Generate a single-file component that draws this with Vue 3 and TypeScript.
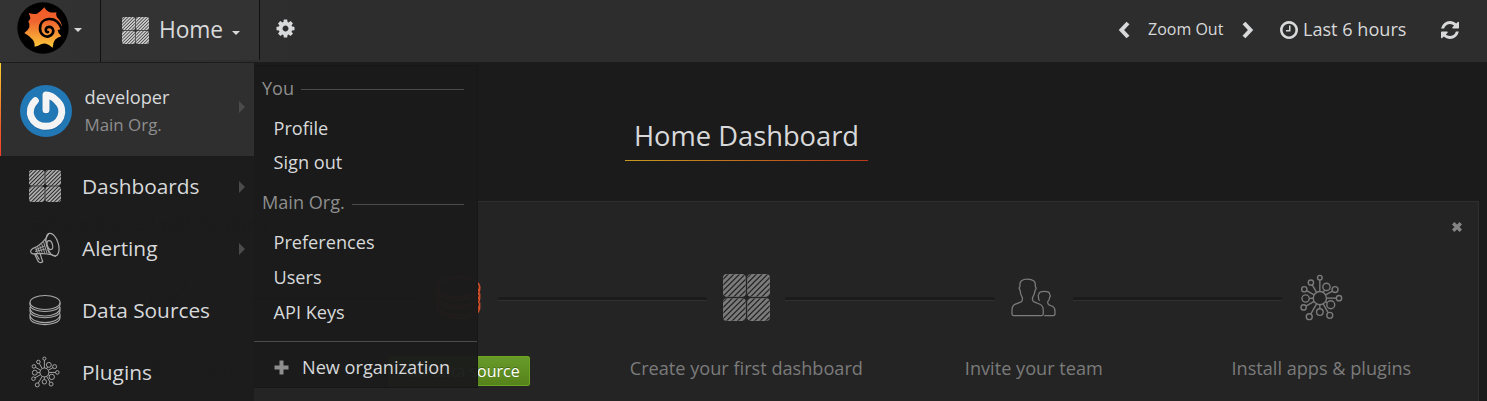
<script setup lang="ts">
interface MenuItem { label: string; icon: 'grid' | 'horn' | 'db' | 'plug'; arrow: boolean }
interface Step { label: string; icon: 'check' | 'db' | 'grid' | 'users' | 'plug' }

const menu: MenuItem[] = [
  { label: 'Dashboards', icon: 'grid', arrow: true },
  { label: 'Alerting', icon: 'horn', arrow: true },
  { label: 'Data Sources', icon: 'db', arrow: false },
  { label: 'Plugins', icon: 'plug', arrow: false },
]
const steps: Step[] = [
  { label: 'Install Grafana', icon: 'check' },
  { label: 'Add data source', icon: 'db' },
  { label: 'Create your first dashboard', icon: 'grid' },
  { label: 'Invite your team', icon: 'users' },
  { label: 'Install apps & plugins', icon: 'plug' },
]
const groups = [
  { title: 'You', cls: 'g-you', links: ['Profile', 'Sign out'] },
  { title: 'Main Org.', cls: 'g-org', links: ['Preferences', 'Users', 'API Keys'] },
]
const nodes: [number, number, number][] = [
  [300, 231, 7], [273, 246, 8], [253, 266, 8], [257, 294, 11], [251, 321, 8], [268, 349, 9],
  [300, 335, 10], [330, 345, 9], [333, 313, 12], [358, 293, 8], [346, 267, 9], [320, 259, 11],
]
const spokes = nodes.map(([x, y, r]) => {
  const dx = x - 300
  const dy = y - 293
  const d = Math.hypot(dx, dy)
  return { x1: 300 + (dx / d) * 20, y1: 293 + (dy / d) * 20, x2: x - (dx / d) * r, y2: y - (dy / d) * r }
})
// Diagonal hatching across the 46-unit tile icon
const hatch = Array.from({ length: 18 }, (_, i) => {
  const s = 2.6 + i * 5.5
  return `M${(s - 48).toFixed(1)} 48L${(s + 2).toFixed(1)} -2`
}).join('')
</script>

<template>
  <div class="page">
    <svg class="defs" width="0" height="0">
      <defs>
        <clipPath id="tiles">
          <rect x="0" y="0" width="22.300" height="22.300" rx="4" /><rect x="23.700" y="0" width="22.300" height="22.300" rx="4" />
          <rect x="0" y="23.700" width="22.300" height="22.300" rx="4" /><rect x="23.700" y="23.700" width="22.300" height="22.300" rx="4" />
        </clipPath>
        <linearGradient id="flame" x1="0" y1="0" x2="0" y2="1">
          <stop offset="0" stop-color="#f05a28" /><stop offset=".35" stop-color="#f0652e" /><stop offset="1" stop-color="#fbca3a" />
        </linearGradient>
        <symbol id="i-grid" viewBox="0 0 46 46">
          <path :d="hatch" clip-path="url(#tiles)" fill="none" stroke="currentColor" stroke-width="2.650" />
          <g fill="none" stroke="currentColor" stroke-width=".6" stroke-opacity=".6">
            <rect x=".4" y=".4" width="21.600" height="21.600" rx="3.500" /><rect x="24" y=".4" width="21.600" height="21.600" rx="3.500" />
            <rect x=".4" y="24" width="21.600" height="21.600" rx="3.500" /><rect x="24" y="24" width="21.600" height="21.600" rx="3.500" />
          </g>
        </symbol>
        <symbol id="i-db" viewBox="84 55 98 96">
          <g fill="none" stroke="currentColor" stroke-width="3.400">
            <ellipse cx="133" cy="80" rx="46" ry="21.500" />
            <path d="M87 80V86C87 115 179 115 179 86V80M87 94V105C87 134 179 134 179 105V94M87 98C92 129 174 129 179 98M87 114V126C87 155 179 155 179 126V114M87 119C92 149 174 149 179 119" />
          </g>
        </symbol>
        <symbol id="i-plug" viewBox="240 220 130 142">
          <g fill="none" stroke="currentColor" stroke-width="4.200">
            <circle cx="300" cy="293" r="20" />
            <circle v-for="(n, i) in nodes" :key="i" :cx="n[0]" :cy="n[1]" :r="n[2]" />
            <line v-for="(s, i) in spokes" :key="'s' + i" :x1="s.x1" :y1="s.y1" :x2="s.x2" :y2="s.y2" />
          </g>
        </symbol>
        <symbol id="i-users" viewBox="216 49 134 116">
          <g fill="none" stroke="currentColor" stroke-width="3.800">
            <path d="M250 108C246 101 243 93 243 85C240 82 240 77 243 73C240 58 250 52 265 52S291 58 288 73C291 77 291 82 288 85C287 93 284 101 280 108V113Q281 118 285 120L302 127Q312 131 312 145V156Q312 161 307 161H224Q219 161 219 156V145Q219 131 229 127L246 120Q250 118 250 113Z" />
            <path d="M301 117Q297 112 298 106Q295 101 299 97Q300 89 315 89Q331 89 331 97Q335 102 331 107Q330 115 325 120Q325 127 329 129L339 133Q347 137 347 147V155Q347 161 342 161H315" />
          </g>
        </symbol>
        <symbol id="i-horn" viewBox="86 228 96 98">
          <g fill="none" stroke="currentColor" stroke-width="3.600">
            <ellipse cx="157" cy="267" rx="18" ry="36" transform="rotate(-16 157 267)" />
            <ellipse cx="149" cy="268" rx="8" ry="14" transform="rotate(-16 149 268)" />
            <path d="M145 233C136 252 122 268 96 279C88 283 88 293 97 295C124 291 146 294 168 302M102 295L113 318Q119 325 127 319L119 294M107 296L117 313" />
            <path d="M106 277L111 293M112 274L117 291M118 270L125 291M124 265L133 292M130 259L140 293M135 253L139 263M142 282L147 294M104 283L134 270M104 288L136 280" stroke-width="2.800" />
          </g>
        </symbol>
        <symbol id="i-check" viewBox="0 0 44 44">
          <path d="M36 10A18.500 18.500 0 1 0 40 22M13 17l8 9 17-18" fill="none" stroke="currentColor" stroke-width="1.600" />
        </symbol>
      </defs>
    </svg>

    <header class="navbar">
      <div class="brand">
        <svg class="logo" viewBox="0 0 156 156">
          <circle cx="78" cy="78" r="77" fill="#000" />
          <path fill="url(#flame)" d="M82 16Q87 27 95 29Q105 33 118 31Q116 40 120 46Q134 58 135 78Q128 84 122 84Q123 95 133 103Q120 107 114 113Q108 121 107 137Q95 127 87 125Q79 124 72 127Q64 132 53 134Q53 120 48 114Q40 103 22 93Q34 85 37 76Q39 67 34 58Q39 54 40 49Q39 41 35 33Q51 38 60 35Q71 29 82 16Z" />
          <path d="M141 97L133 78C125 58 110 50 95 51C77 53 68 66 69 81C70 97 83 106 95 103C107 100 112 88 107 80C102 73 91 73 87 80C85 86 88 91 93 90" fill="none" stroke="#000" stroke-width="8" stroke-linecap="round" />
        </svg>
        <i class="caret" />
      </div>
      <div class="dash">
        <svg class="dash-icon"><use href="#i-grid" /></svg>
        <span class="dash-name">Home</span>
        <i class="caret" />
      </div>
      <svg class="cog" viewBox="0 0 1792 1792"><path fill="currentColor" d="M1152 896q0-106-75-181t-181-75-181 75-75 181 75 181 181 75 181-75 75-181zm512-109v222q0 12-8 23t-20 13l-185 28q-19 54-39 91 35 50 107 138 10 12 10 25t-9 23q-27 37-99 108t-94 71q-12 0-26-9l-138-108q-44 23-91 38-16 136-29 186-7 28-36 28h-222q-14 0-24.500-8.500t-11.500-21.500l-28-184q-49-16-90-37l-141 107q-10 9-25 9-14 0-25-11-126-114-165-168-7-10-7-23 0-12 8-23 15-21 51-66.500t54-70.500q-27-50-41-99l-183-27q-13-2-21-12.500t-8-23.500v-222q0-12 8-23t19-13l186-28q14-46 39-92-40-57-107-138-10-12-10-24 0-10 9-23 26-36 98.500-107.500t94.500-71.500q13 0 26 10l138 107q44-23 91-38 16-136 29-186 7-28 36-28h222q14 0 24.500 8.500t11.500 21.500l28 184q49 16 90 37l142-107q9-9 24-9 13 0 25 10 129 119 165 170 7 8 7 22 0 12-8 23-15 21-51 66.500t-54 70.500q26 50 41 98l183 28q13 2 21 12.500t8 23.500z" /></svg>
      <div class="tools">
        <svg class="chev" viewBox="0 0 12 18"><path d="M10 2L3.500 9L10 16" /></svg>
        <span class="zoom">Zoom Out</span>
        <svg class="chev" viewBox="0 0 12 18"><path d="M2 2L8.500 9L2 16" /></svg>
        <svg class="clock" viewBox="128 128 1536 1536"><path fill="currentColor" d="M1024 544v448q0 14-9 23t-23 9h-320q-14 0-23-9t-9-23v-64q0-14 9-23t23-9h224v-352q0-14 9-23t23-9h64q14 0 23 9t9 23zm416 352q0-148-73-273t-198-198-273-73-273 73-198 198-73 273 73 273 198 198 273 73 273-73 198-198 73-273zm224 0q0 209-103 385.500t-279.500 279.500-385.500 103-385.500-103-279.500-279.500-103-385.500 103-385.500 279.500-279.500 385.500-103 385.500 103 279.500 279.500 103 385.500z" /></svg>
        <span class="range">Last 6 hours</span>
        <svg class="refresh" viewBox="128 128 1536 1536"><path fill="currentColor" d="M1639 1056q0 5-1 7-64 268-268 434.500t-478 166.500q-146 0-282.500-55t-243.500-157l-129 129q-19 19-45 19t-45-19-19-45v-448q0-26 19-45t45-19h448q26 0 45 19t19 45-19 45l-137 137q71 66 161 102t187 36q134 0 250-65t186-179q11-17 53-117 8-23 30-23h192q13 0 22.500 9.500t9.500 22.500zm25-800v448q0 26-19 45t-45 19h-448q-26 0-45-19t-19-45 19-45l138-138q-148-137-349-137-134 0-250 65t-186 179q-11 17-53 117-8 23-30 23h-199q-13 0-22.500-9.500t-9.500-22.500v-7q65-268 270-434.500t480-166.500q146 0 284 55.500t245 156.500l130-129q19-19 45-19t45 19 19 45z" /></svg>
      </div>
    </header>

    <main class="content">
      <div class="title-row"><h1>Home Dashboard</h1></div>
      <section class="panel">
        <div class="panel-head">
          <span class="panel-title">Getting Started with Grafana</span>
          <svg class="close" viewBox="0 0 10 10"><path d="M1.200 1.200L8.800 8.800M8.800 1.200L1.200 8.800" /></svg>
        </div>
        <div class="steps">
          <div v-for="s in steps" :key="s.label" class="step" :class="'s-' + s.icon">
            <div class="track">
              <i class="rail" />
              <span class="cell"><svg><use :href="'#i-' + s.icon" /></svg></span>
              <i class="rail" />
            </div>
            <button v-if="s.icon === 'db'" class="btn">{{ s.label }}</button>
            <span v-else class="step-label">{{ s.label }}</span>
          </div>
        </div>
      </section>
    </main>

    <aside class="side">
      <div class="profile">
        <svg class="avatar" viewBox="0 0 156 156">
          <circle cx="78" cy="78" r="78" fill="#2277b5" />
          <path d="M46 47C15 78 35 124 78 124S142 76 110 47C101 37 91 30 78 30V74" fill="none" stroke="#155a90" stroke-opacity=".55" stroke-width="22" stroke-linecap="round" stroke-linejoin="round" transform="translate(0 2)" />
          <path d="M46 47C15 78 35 124 78 124S142 76 110 47C101 37 91 30 78 30V74" fill="none" stroke="#f4f4f4" stroke-width="21" stroke-linecap="round" stroke-linejoin="round" />
        </svg>
        <div class="who"><span class="user">developer</span><span class="org">Main Org.</span></div>
        <i class="arrow" />
      </div>
      <nav class="items">
        <a v-for="m in menu" :key="m.label" class="item">
          <span class="item-icon"><svg :class="'m-' + m.icon"><use :href="'#i-' + m.icon" /></svg></span>
          <span class="item-label">{{ m.label }}</span>
          <i v-if="m.arrow" class="arrow" />
        </a>
      </nav>
    </aside>

    <div class="submenu">
      <div v-for="g in groups" :key="g.title" class="group" :class="g.cls">
        <div class="group-title"><span>{{ g.title }}</span><i /></div>
        <a v-for="l in g.links" :key="l" class="link">{{ l }}</a>
      </div>
      <div class="new-org">
        <svg viewBox="0 0 15 15"><path d="M7.500 .5V14.500M.5 7.500H14.500" /></svg>
        <span>New organization</span>
      </div>
    </div>
  </div>
</template>

<style>
html, body { background: #1b1b1b; overflow: hidden; }
</style>
<style scoped>
* { box-sizing: border-box; }
.page { position: relative; width: 1487px; height: 401px; overflow: hidden; background: #1b1b1b; color: #d8d9da; font-family: "Open Sans", sans-serif; }
.defs { position: absolute; }
.navbar { display: flex; align-items: flex-start; height: 63px; background: linear-gradient(90deg, #333 0, #2d2d2d 300px, #2d2d2d); border-bottom: 1px solid #1c1c1c; }
.brand { display: flex; align-items: center; width: 101px; height: 62px; padding-left: 17px; padding-bottom: 6px; border-right: 1px solid #111; }
.logo { width: 52px; height: 52px; }
.caret { width: 0; height: 0; border: 4px solid transparent; border-top-color: #d8d9da; border-bottom: 0; }
.brand .caret { margin: 3px 0 0 5px; }
.dash { display: flex; align-items: center; width: 159px; height: 60px; padding-left: 21px; background: #333; border-right: 1px solid #111; }
.dash-icon { width: 27px; height: 27px; color: #cfcfd0; }
.dash-name { width: 65px; margin-left: 10px; font-size: 22.800px; line-height: 60px; height: 60px; letter-spacing: -.1px; }
.dash .caret { margin: 6px 0 0 8px; }
.cog { width: 21px; height: 21px; margin: 18px 0 0 15px; }
.tools { display: flex; align-items: center; height: 60px; margin-left: auto; padding-right: 28px; }
.chev { width: 12px; height: 18px; fill: none; stroke: #d8d9da; stroke-width: 4; }
.zoom { width: 76px; height: 24px; margin: 0 18px; font-size: 16px; line-height: 22px; white-space: nowrap; }
.clock { width: 18px; height: 18px; margin: -1px 0 0 26px; }
.range { width: 104px; height: 26px; margin-left: 5px; font-size: 18.100px; line-height: 24px; white-space: nowrap; }
.refresh { width: 18px; height: 18px; margin: -1px 0 0 34px; }
.content { padding: 0 8px; }
.title-row { display: flex; justify-content: center; height: 138px; padding-top: 52px; padding-left: 6px; }
h1 { width: 243px; height: 46px; margin: 0; text-align: center; font-size: 27.300px; font-weight: 400; line-height: 42px; white-space: nowrap; border-bottom: 1px solid; border-image: linear-gradient(90deg, #c79c20, #b93818) 1; }
.panel { height: 220px; padding: 0 13px 0 19px; background: #242424; border: 1px solid #2f2f2f; }
.panel-head { display: flex; justify-content: space-between; height: 50px; color: #000; font-size: 18px; line-height: 42px; }
.close { width: 10px; height: 10px; margin: 20px 3px 0 0; stroke: #848484; stroke-width: 3.400; }
.steps { display: flex; width: 1437.500px; margin-left: -.4px; }
.step { display: flex; flex-direction: column; align-items: center; width: 287.500px; color: #7b7b7b; }
.track { display: flex; align-items: center; width: 100%; height: 91px; }
.rail { flex: 1; height: 4px; margin-top: 3px; background: #1b1b1b; border-bottom: 1px solid #303030; }
.s-check .rail:first-child, .s-plug .rail:last-child { visibility: hidden; }
.cell { display: flex; justify-content: center; width: 78px; }
.cell svg { width: 47px; height: 47px; }
.s-users .cell svg { width: 45px; height: 39px; }
.s-plug .cell svg { width: 43px; height: 47px; }
.s-db .cell svg { width: 45px; height: 45px; color: #d14e27; }
.s-check { color: #101010; }
.step-label { font-size: 18.150px; line-height: 50px; white-space: nowrap; }
.btn { width: 142px; height: 30px; margin-top: 13px; padding: 0; color: #fff; font: 16px "Open Sans", sans-serif; background: linear-gradient(#689a2a, #56831b); border: 1px solid #6ca51f; border-radius: 2px; text-shadow: 0 -1px 0 rgba(0,0,0,.3); }
.side { position: absolute; left: 0; top: 63px; width: 254px; height: 338px; background: rgba(28,28,28,.965); }
.profile { display: flex; align-items: center; height: 93px; padding-left: 19px; background: #2f2f2f; border-left: 1px solid; border-image: linear-gradient(#ffd02f, #f05a28 70%, #f8402c) 0 0 0 1; }
.avatar { width: 52px; height: 52px; margin-top: 3px; }
.who { display: flex; flex-direction: column; width: 150.500px; margin-left: 12.500px; }
.user { font-size: 18.200px; line-height: 28px; margin-top: 1px; }
.org { color: #8e8e8e; font-size: 16.900px; line-height: 27px; }
.arrow { width: 0; height: 0; border: 6px solid transparent; border-left-color: #4b4b4b; border-right: 0; margin-left: 4px; }
.profile .arrow { margin-top: -6px; }
.items { display: flex; flex-direction: column; margin-top: -1px; }
.item { display: flex; align-items: center; height: 62px; padding-left: 22px; }
.item-icon { display: flex; justify-content: center; width: 46px; color: #aaa; }
.item-icon svg { width: 32px; height: 32px; margin-top: -1px; }
.item-icon .m-plug { width: 29px; height: 32px; }
.item-label { width: 157px; margin-left: 14px; font-size: 20.850px; }
.item .arrow { margin: 2px 0 0; }
.submenu { position: absolute; left: 254px; top: 65px; width: 224px; height: 323px; padding-top: 5px; background: rgba(27,27,27,.97); border: 1px solid #171717; border-left: 0; }
.group-title { display: flex; align-items: center; height: 34px; padding: 0 13px 0 8px; color: #8e8e8e; font-size: 18.100px; }
.group-title i { flex: 1; height: 1px; margin: 2px 0 0 7px; background: #4b4b4b; }
.g-org .group-title i { margin-top: 4px; }
.group { display: flex; flex-direction: column; }
.link { height: 34px; padding-left: 19.500px; font-size: 18.150px; line-height: 34px; }
.g-you .group-title { margin-bottom: 6px; }
.g-org .group-title { margin: 6px 0; }
.g-org .link { height: 35px; line-height: 35px; }
.new-org { display: flex; align-items: center; height: 51px; margin-top: 11px; padding-left: 20px; border-top: 1px solid #4b4b4b; font-size: 18.150px; }
.new-org svg { width: 15px; height: 15px; margin-right: 13px; stroke: #8e8e8e; stroke-width: 4; }
</style>
